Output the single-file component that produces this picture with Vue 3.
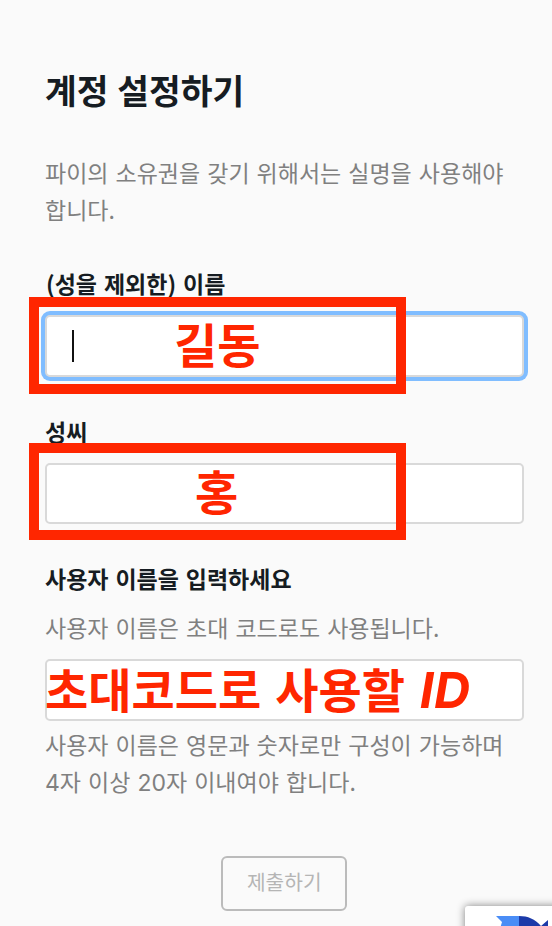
<template>
  <main class="page">
    <h1 class="title">계정 설정하기</h1>
    <p class="text intro">파이의 소유권을 갖기 위해서는 실명을 사용해야<br />합니다.</p>

    <form class="form" @submit.prevent>
      <div class="field">
        <label class="label first-label" for="first-name">(성을 제외한) 이름</label>
        <div class="control">
          <input id="first-name" v-model="firstName" class="input focused" type="text" />
          <span class="caret"></span>
          <div class="frame"></div>
          <span class="note note-first">길동</span>
        </div>
      </div>

      <div class="field">
        <label class="label" for="last-name">성씨</label>
        <div class="control">
          <input id="last-name" v-model="lastName" class="input" type="text" />
          <div class="frame frame-last"></div>
          <span class="note note-last">홍</span>
        </div>
      </div>

      <div class="field">
        <label class="label" for="username">사용자 이름을 입력하세요</label>
        <p class="text hint">사용자 이름은 초대 코드로도 사용됩니다.</p>
        <div class="control">
          <input id="username" v-model="username" class="input" type="text" />
          <span class="note note-user">초대코드로 사용할 <i class="note-id">ID</i></span>
        </div>
        <p class="text help">사용자 이름은 영문과 숫자로만 구성이 가능하며<br /><span class="num">4</span>자 이상 <span class="num">20</span>자 이내여야 합니다.</p>
      </div>

      <button class="submit" type="submit" disabled>제출하기</button>
    </form>

    <div class="captcha">
      <svg class="captcha-icon" width="56" height="56" viewBox="0 0 56 56">
        <path d="M0 0H23V18H14L0 26L6 6Z" fill="#4a8df6" />
        <path d="M23 0C32 0 39 3 45 10L52 4V28H23Z" fill="#1c3aa9" />
      </svg>
    </div>
  </main>
</template>

<script setup>
import { ref } from 'vue'

const firstName = ref('')
const lastName = ref('')
const username = ref('')
</script>

<style>
body {
  margin: 0;
  background: #fafafa;
}
</style>

<style scoped>
.page {
  position: relative;
  box-sizing: border-box;
  height: 926px;
  padding: 68px 28.5px 0 45px;
  overflow: hidden;
  background: #fafafa;
  color: #161c22;
  font-family: 'Noto Sans CJK KR', sans-serif;
}
.title {
  margin: 0;
  font-size: 34.5px;
  font-weight: 700;
  line-height: 42px;
  word-spacing: 1px;
}
.text {
  margin: 0;
  color: #808080;
  font-size: 23px;
  line-height: 37px;
  word-spacing: 1.9px;
  white-space: nowrap;
}
.intro {
  margin-top: 44px;
}
.form {
  display: flex;
  flex-direction: column;
  margin-top: 37px;
}
.field {
  display: flex;
  flex-direction: column;
  margin-bottom: 36px;
}
.label {
  height: 37px;
  margin-bottom: 13px;
  font-size: 23px;
  font-weight: 700;
  line-height: 37px;
  word-spacing: 1.7px;
}
.first-label {
  padding-left: 1px;
}
.control {
  position: relative;
  height: 61.5px;
}
.input {
  display: block;
  box-sizing: border-box;
  width: 100%;
  height: 61.5px;
  padding: 0 24px;
  border: 2px solid #d9d9d9;
  border-radius: 5px;
  outline: none;
  background: #fff;
  font: inherit;
}
.focused {
  box-shadow: 0 0 0 4px #80bdff;
}
.caret {
  position: absolute;
  top: 15px;
  left: 26.5px;
  width: 2.5px;
  height: 32px;
  background: #111;
}

/* red callouts drawn over the fields */
.frame {
  position: absolute;
  top: -18px;
  left: -16px;
  box-sizing: border-box;
  width: 377px;
  height: 97px;
  border: 10px solid #ff2600;
}
.frame-last {
  top: -19.5px;
}
.note {
  position: absolute;
  color: #ff2600;
  font-size: 47px;
  font-weight: 700;
  line-height: 61px;
  white-space: nowrap;
}
.note-first {
  top: -3px;
  left: 129px;
}
.note-last {
  top: -4px;
  left: 150px;
}
.note-user {
  top: -2px;
  left: 0;
  word-spacing: 3.3px;
}
.note-id {
  margin-left: 1px;
  font-family: Inter, 'Liberation Sans', sans-serif;
  font-size: 50px;
  line-height: 1;
}

.hint {
  margin: -1px 0 13px;
}
.help {
  margin-top: 5px;
}
.num {
  font-family: Inter, sans-serif;
  line-height: 1;
}
.submit {
  align-self: center;
  box-sizing: border-box;
  width: 126px;
  height: 55.5px;
  margin-top: 20px;
  padding: 0 0 5px;
  border: 2px solid #bbb;
  border-radius: 6px;
  background: transparent;
  color: #b5b5b5;
  font-family: inherit;
  font-size: 20.3px;
}
.captcha {
  position: absolute;
  top: 906px;
  left: 465px;
  width: 100px;
  height: 60px;
  border-radius: 3px;
  background: #fff;
  box-shadow: 0 0 8px #808080;
}
.captcha-icon {
  display: block;
  margin: 10px 0 0 31px;
}
</style>
